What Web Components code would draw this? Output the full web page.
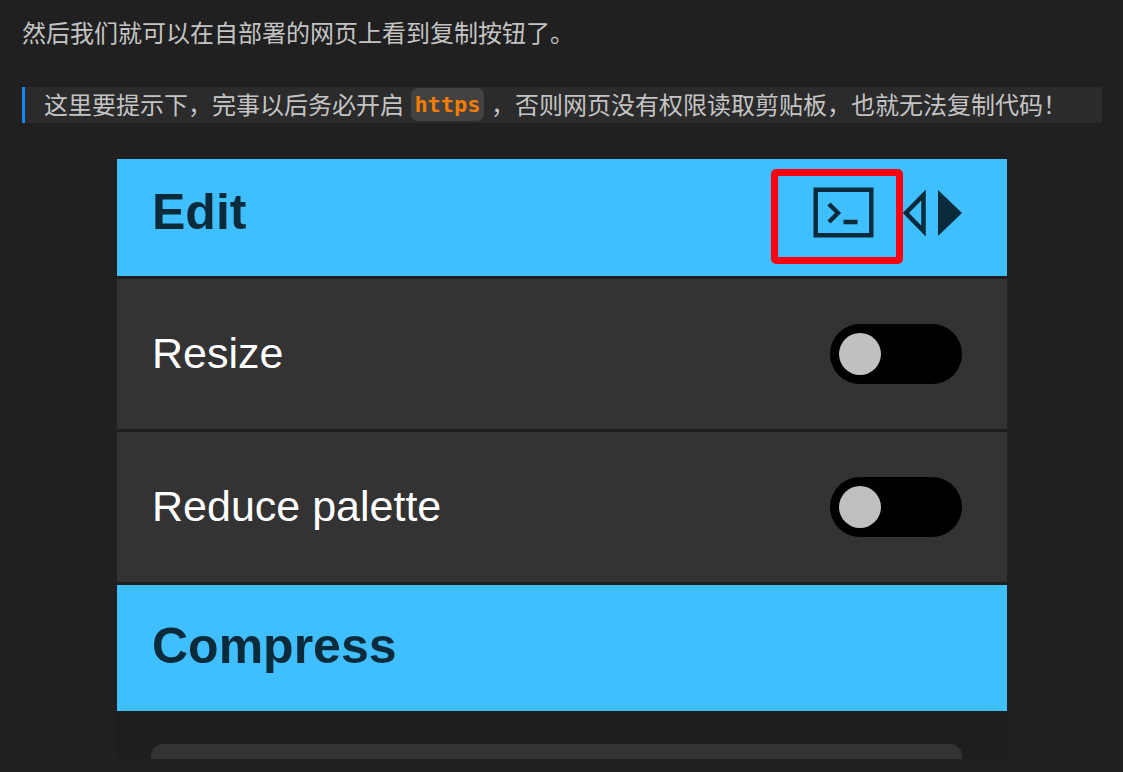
<!DOCTYPE html>
<html lang="zh-CN">
<head>
<meta charset="utf-8">
<meta name="viewport" content="width=device-width, initial-scale=1">
<title>复制按钮</title>
<style>
  body { margin: 0; background: #202020; color: #c4c4c4; font: 24px/36px "Noto Sans CJK SC", sans-serif; }
</style>
</head>
<body>
<article-body>
  <article-text>然后我们就可以在自部署的网页上看到复制按钮了。</article-text>
  <note-quote>这里要提示下，完事以后务必开启 <inline-code>https</inline-code> ，否则网页没有权限读取剪贴板，也就无法复制代码！</note-quote>
  <options-panel>
    <panel-header>Edit<edit-actions slot="actions"></edit-actions></panel-header>
    <toggle-row name="resize">Resize</toggle-row>
    <toggle-row name="palette">Reduce palette</toggle-row>
    <panel-header class="tall">Compress</panel-header>
    <format-field></format-field>
  </options-panel>
</article-body>

<script>
  const define = (name, html, setup) => {
    const template = document.createElement('template');
    template.innerHTML = html;
    customElements.define(name, class extends HTMLElement {
      constructor() {
        super();
        this.attachShadow({ mode: 'open' }).append(template.content.cloneNode(true));
      }
      connectedCallback() { if (setup) setup(this); }
    });
  };

  define('article-body', `
    <style>
      :host { display: block; }
      main { display: flex; flex-direction: column; gap: 36px; padding: 15px 21px 12px 22px; }
    </style>
    <main><slot></slot></main>`);

  define('article-text', `
    <style>:host { display: block; } p { margin: 0; line-height: 34px; padding-bottom: 2px; }</style>
    <p><slot></slot></p>`);

  define('note-quote', `
    <style>
      :host { display: block; }
      blockquote { margin: 0; padding: 0 0 2px 19px; border-left: 3px solid #1589f5; background: #2b2b2b; line-height: 34px; }
    </style>
    <blockquote><slot></slot></blockquote>`);

  define('inline-code', `
    <style>
      :host { display: inline-block; margin: 0 2px; vertical-align: top; }
      code { display: block; margin-top: 1px; padding: 0 3px; border-radius: 7px; background: #424242;
             color: #f57c00; font: bold 22px/33px "DejaVu Sans Mono", monospace; }
    </style>
    <code><slot></slot></code>`);

  define('options-panel', `
    <style>
      :host { display: block; }
      section { display: flex; flex-direction: column; gap: 3px; max-width: 890px; margin: 0 auto;
                background: #1e1e1e; font-family: "Liberation Sans", Arial, sans-serif; }
    </style>
    <section><slot></slot></section>`);

  define('panel-header', `
    <style>
      :host { display: block; background: #40bfff; color: #0b2a3a; }
      header { display: flex; align-items: center; justify-content: space-between;
               padding: 10px 45px 12px 35px; }
      h2 { margin: 0; padding-bottom: 10px; font-size: 50px; line-height: 60px; }
      :host(.tall) header { padding: 31px 45px 31px 35px; }
      :host(.tall) h2 { padding-bottom: 4px; }
    </style>
    <header><h2><slot></slot></h2><slot name="actions"></slot></header>`);

  define('edit-actions', `
    <style>
      :host { display: flex; align-items: flex-start; }
      button { margin: 0; border: 0; background: none; color: inherit; cursor: pointer; }
      svg { display: block; }
      .copy { padding: 11px 22px 19px 35px; border: 7px solid #ff0010; border-radius: 5px; }
      .sides { padding: 20px 0 0; }
    </style>
    <button class="copy" type="button" aria-label="Copy command">
      <svg width="61" height="51" viewBox="0 0 61 51" fill="none" stroke="currentColor" stroke-width="4.4">
        <path d="M2.7 2.7H58.3V48.3H2.7ZM16 17L25 26L16 35M30.500 35H44.500"/>
      </svg>
    </button>
    <button class="sides" type="button" aria-label="Copy settings to other side">
      <svg width="59" height="48" viewBox="0 0 59 48">
        <path d="M20.500 6V42L3 24Z" fill="none" stroke="currentColor" stroke-width="4.500"/>
        <path d="M35 1V47L59 24Z" fill="currentColor"/>
      </svg>
    </button>`);

  define('toggle-row', `
    <style>
      :host { display: block; background: #333; color: #fff; }
      label { display: flex; align-items: center; justify-content: space-between;
              padding: 45px 45px 45px 35px; font-size: 43px; line-height: 56px; cursor: pointer; }
      span { padding-bottom: 2px; }
      input { appearance: none; display: flex; align-items: center; box-sizing: border-box; flex: none;
              width: 132px; height: 60px; margin: 0; padding: 0 9px; border-radius: 30px; background: #000; cursor: pointer; }
      input::before { content: ""; width: 42px; height: 42px; border-radius: 50%; background: #c0c0c0; }
      input:checked { justify-content: flex-end; }
    </style>
    <label><span><slot></slot></span><input type="checkbox"></label>`,
    host => { host.shadowRoot.querySelector('input').name = host.getAttribute('name'); });

  define('format-field', `
    <style>
      :host { display: block; padding: 30px 45px 0 34px; }
      div { height: 15px; border-radius: 12px 12px 0 0; background: #333; }
    </style>
    <div></div>`);
</script>
</body>
</html>
